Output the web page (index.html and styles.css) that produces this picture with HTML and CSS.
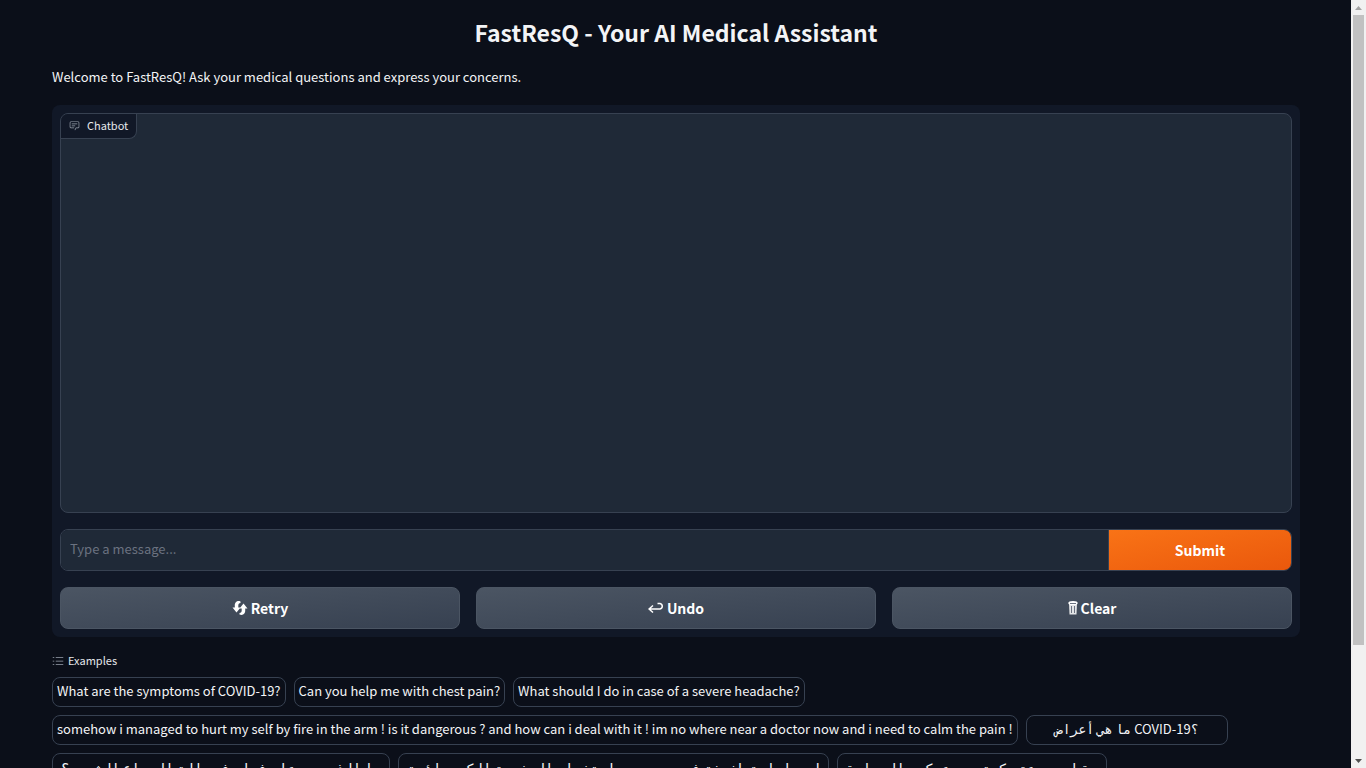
FILE: index.html
```html
<!DOCTYPE html>
<html lang="en">
<head>
<meta charset="utf-8">
<title>FastResQ</title>
<link rel="stylesheet" href="styles.css">
</head>
<body>
<div class="viewport">
<main class="page">
  <h1 class="title">FastResQ - Your AI Medical Assistant</h1>
  <p class="intro">Welcome to FastResQ! Ask your medical questions and express your concerns.</p>
  <section class="panel">
    <div class="chat">
      <div class="chat-label">
        <svg class="chat-icon" viewBox="0 0 32 32" aria-hidden="true"><path d="M17.74 30 16 29l4-7h6a2 2 0 0 0 2-2V8a2 2 0 0 0-2-2H6a2 2 0 0 0-2 2v12a2 2 0 0 0 2 2h9v2H6a4 4 0 0 1-4-4V8a4 4 0 0 1 4-4h20a4 4 0 0 1 4 4v12a4 4 0 0 1-4 4h-4.84Z"/><path d="M8 10h16v2H8zM8 16h10v2H8z"/></svg>
        <span>Chatbot</span>
      </div>
    </div>
    <form class="composer">
      <input class="message" type="text" aria-label="Message" placeholder="Type a message...">
      <button class="submit" type="button">Submit</button>
    </form>
    <div class="actions">
      <button class="action" type="button"><svg class="glyph" viewBox="0 0 16 16" aria-hidden="true"><path d="M8.500 1.500C5 0 2.500 2.500 2.800 6v1.500H.5l4 5 4-5H6.300V5.500c0-1.500.7-2.500 2.200-2.500zM7.500 14.500c3.500 1.500 6-1 5.700-4.500V8.500h2.300l-4-5-4 5h2.200v2c0 1.500-.7 2.500-2.200 2.500z"/></svg>Retry</button>
      <button class="action" type="button"><svg class="glyph" viewBox="0 0 16 16" aria-hidden="true"><path class="line" d="M1 9h11a2.800 2.800 0 0 0 0-5.500H9.500M5 5.500 1 9l4 3.500"/></svg>Undo</button>
      <button class="action" type="button"><svg class="glyph narrow" viewBox="0 0 10 16" aria-hidden="true"><path d="M1 3h8l-.5 11.500h-7z" opacity=".85"/><ellipse cx="5" cy="3" rx="4.700" ry="2"/><path class="ribs" d="M3.500 6v7M6.500 6v7M2 3.500h6"/></svg>Clear</button>
    </div>
  </section>
  <section class="examples">
    <h2 class="examples-title"><svg class="list-icon" viewBox="0 0 32 32" aria-hidden="true"><path d="M10 6h20v2H10zm0 18h20v2H10zm0-9h20v2H10zM2 6h4v2H2zm0 18h4v2H2zm0-9h4v2H2z"/></svg>Examples</h2>
    <div class="chips">
      <button class="chip" type="button">What are the symptoms of COVID-19?</button>
      <button class="chip" type="button">Can you help me with chest pain?</button>
      <button class="chip" type="button">What should I do in case of a severe headache?</button>
      <button class="chip" type="button">somehow i managed to hurt my self by fire in the arm ! is it dangerous ? and how can i deal with it ! im no where near a doctor now and i need to calm the pain !</button>
      <button class="chip wide" type="button">ما هي أعراض COVID-19؟</button>
      <button class="chip arabic" type="button">ما الذي يجب علي فعله في حالة الصداع الشديد؟</button>
      <button class="chip arabic" type="button">لدي إصابة طفيفة في يدي بسبب استخدام المفرمة الكهربائية</button>
      <button class="chip arabic" type="button">سقطت بسرعة حكمة صحن عسكري الحرارة</button>
    </div>
  </section>
</main>
<div class="scrollbar" aria-hidden="true">
  <svg class="arrow up" viewBox="0 0 15 15"><path d="M4 10h7L7.500 6z"/></svg>
  <div class="thumb"></div>
  <svg class="arrow" viewBox="0 0 15 15"><path d="M4 6h7l-3.500 4z"/></svg>
</div>
</div>
</body>
</html>
```
FILE: styles.css
```css
* { box-sizing: border-box; }
body { margin: 0; background: #0b0f19; color: #f3f4f6; font-family: "Noto Sans CJK SC", "DejaVu Sans Mono", sans-serif; font-size: 13px; line-height: 20px; }
button, input { font: inherit; color: inherit; margin: 0; }
.viewport { display: flex; height: 100vh; overflow: hidden; }
.page { flex: 1; min-width: 0; padding: 15px 51px 0 52px; }
.title { margin: 0; text-align: center; font-size: 23px; line-height: 34px; font-weight: 600; }
.intro { margin: 17px 0; line-height: 22px; }
.panel { display: flex; flex-direction: column; gap: 16px; padding: 8px; background: #111827; border-radius: 8px; }
.chat { height: 400px; background: #1f2937; border: 1px solid #374151; border-radius: 8px; overflow: hidden; }
.chat-label { display: inline-flex; align-items: center; gap: 7px; height: 25px; padding: 0 8px 2px; background: #111827; border: solid #374151; border-width: 0 1px 1px 0; border-radius: 0 0 8px 0; font-size: 11px; color: #e5e7eb; }
.chat-icon { width: 11px; height: 11px; fill: #9ca3af; }
.composer { display: flex; height: 42px; border: 1px solid #374151; border-radius: 8px; overflow: hidden; }
.message { flex: 1; min-width: 0; border: 0; border-right: 1px solid #374151; background: #1f2937; padding: 0 10px 2px 9px; outline: 0; }
.message::placeholder { color: #6b7280; opacity: 1; }
.submit { width: 182px; border: 0; background: linear-gradient(to bottom right, #f97316, #ea580c); color: #fff; font-size: 14px; font-weight: 700; }
.actions { display: grid; grid-template-columns: repeat(3, 1fr); gap: 16px; }
.action { display: flex; align-items: center; justify-content: center; gap: 3px; height: 42px; border: 1px solid #4b5563; border-radius: 8px; background: linear-gradient(to bottom right, #4b5563, #374151); color: #fff; font-size: 14px; font-weight: 700; }
.glyph { width: 16px; height: 16px; fill: #fff; }
.narrow { width: 10px; }
.line { fill: none; stroke: #fff; stroke-width: 1.5; }
.ribs { fill: none; stroke: #6b7280; stroke-width: 1; }
.examples-title { display: flex; align-items: center; gap: 4px; margin: 15px 0 8px; font-size: 11px; line-height: 17px; font-weight: 400; color: #e5e7eb; }
.list-icon { width: 12px; height: 12px; fill: #9ca3af; }
.chips { display: flex; flex-wrap: wrap; gap: 8px; }
.chip { flex: none; height: 30px; padding: 0 4px 2px; border: 1px solid #374151; border-radius: 8px; background: #0b0f19; white-space: nowrap; }
.wide { min-width: 202px; }
.arabic { padding: 0 8px; font-size: 14px; }
.scrollbar { flex: none; width: 15px; display: flex; flex-direction: column; background: #f1f1f1; }
.arrow { height: 15px; fill: #505050; }
.up { fill: #a3a3a3; }
.thumb { height: 82vh; margin: 0 2px auto; background: #c1c1c1; }
```
